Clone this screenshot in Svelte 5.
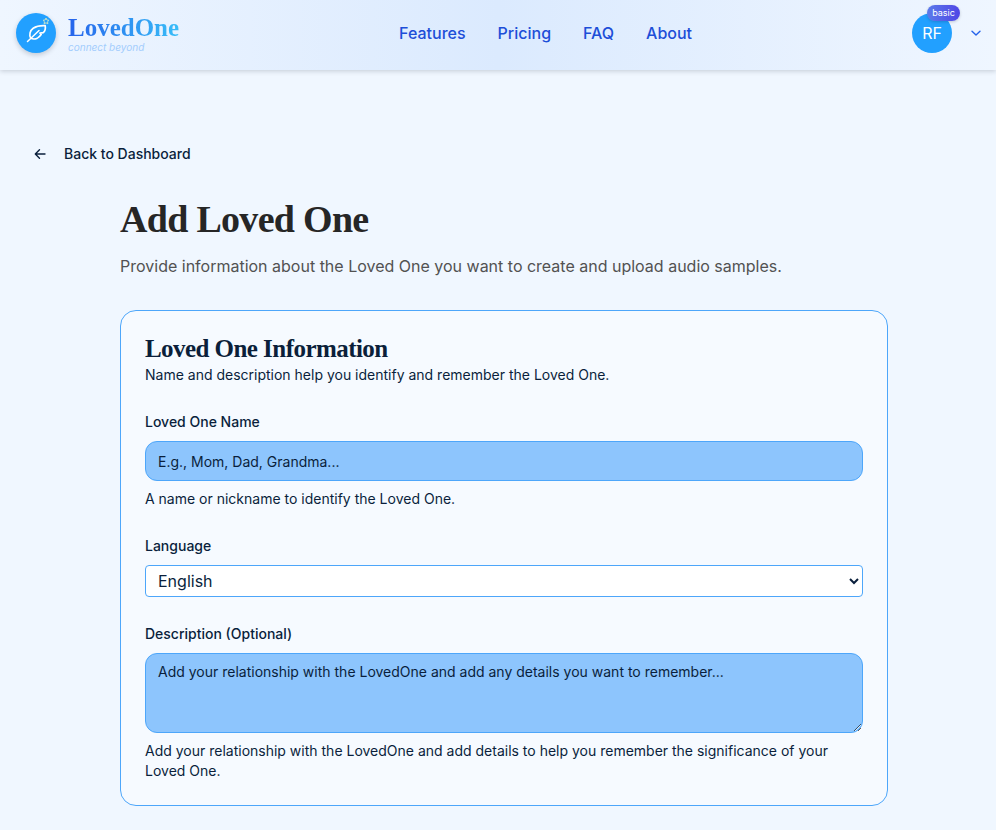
<script lang="ts">
	let nav = ['Features', 'Pricing', 'FAQ', 'About'];
</script>

<header class="topbar">
	<div class="brand">
		<div class="logo">
			<svg width="40" height="40" viewBox="0 0 40 40" fill="none">
				<path d="M11.5 28.5 L23 17.5" stroke="#fff" stroke-width="1.5" stroke-linecap="round" />
				<path d="M14.8 25.3 C12.8 22 14 17.5 17.2 15.2 C20.5 13 25 12.4 29.2 12.6 C29.6 15 29.2 18 27.2 19.7 L24 20.2 L25.2 21.5 C23 24.7 19 27.3 14.8 25.3 Z" stroke="#fff" stroke-width="1.7" stroke-linejoin="round" />
				<path d="M30 5 L30.9 7 L33 7.3 L31.5 8.7 L31.9 10.8 L30 9.8 L28.1 10.8 L28.5 8.7 L27 7.3 L29.1 7 Z" stroke="#c5e3c9" stroke-width="1" stroke-linejoin="round" />
			</svg>
		</div>
		<div class="wordmark">
			<span class="name">LovedOne</span>
			<span class="tag">connect beyond</span>
		</div>
	</div>
	<nav class="links">
		{#each nav as item}
			<span>{item}</span>
		{/each}
	</nav>
	<div class="account">
		<div class="avatar">
			RF
			<span class="badge">basic</span>
		</div>
		<svg width="12" height="12" viewBox="0 0 12 12" fill="none">
			<path d="M2 4.2 L6 8 L10 4.2" stroke="#2563eb" stroke-width="1.4" stroke-linecap="round" stroke-linejoin="round" />
		</svg>
	</div>
</header>

<main class="page">
	<div class="back">
		<svg width="16" height="16" viewBox="0 0 16 16" fill="none">
			<path d="M13 8 H3.5 M7.5 3.8 L3.3 8 L7.5 12.2" stroke="#0a1f3c" stroke-width="1.4" stroke-linecap="round" stroke-linejoin="round" />
		</svg>
		<span>Back to Dashboard</span>
	</div>

	<section class="content">
		<h1>Add Loved One</h1>
		<p class="lead">Provide information about the Loved One you want to create and upload audio samples.</p>

		<form class="card">
			<h2>Loved One Information</h2>
			<p class="sub">Name and description help you identify and remember the Loved One.</p>

			<div class="field first">
				<label for="name">Loved One Name</label>
				<input id="name" type="text" placeholder="E.g., Mom, Dad, Grandma..." />
				<p class="hint">A name or nickname to identify the Loved One.</p>
			</div>

			<div class="field">
				<label for="lang">Language</label>
				<select id="lang">
					<option>English</option>
				</select>
			</div>

			<div class="field">
				<label for="desc">Description (Optional)</label>
				<textarea id="desc" placeholder="Add your relationship with the LovedOne and add any details you want to remember..."></textarea>
				<p class="hint">Add your relationship with the LovedOne and add details to help you remember the significance of your Loved One.</p>
			</div>
		</form>
	</section>
</main>

<style>
	:global(body) {
		background: #f0f7ff;
		font-family: Inter, 'Liberation Sans', sans-serif;
		color: #0a1f3c;
	}
	.topbar {
		height: 70px;
		box-sizing: border-box;
		display: flex;
		justify-content: space-between;
		align-items: center;
		padding: 0 14px 4px 16px;
		background: linear-gradient(90deg, #eff6ff, #dbeafe 50%, #eff6ff);
		box-shadow: 0 1px 5px rgba(15, 23, 42, 0.2);
	}
	.brand {
		display: flex;
		align-items: center;
		gap: 12px;
	}
	.logo {
		width: 40px;
		height: 40px;
		border-radius: 50%;
		background: #22a0ff;
		box-shadow: 0 2px 5px rgba(15, 23, 42, 0.2);
	}
	.logo svg {
		display: block;
	}
	.wordmark {
		display: flex;
		flex-direction: column;
		padding-top: 2px;
	}
	.name {
		font-family: 'Liberation Serif', serif;
		font-weight: 700;
		font-size: 25px;
		line-height: 26px;
		background: linear-gradient(90deg, #2563eb, #38bdf8);
		background-clip: text;
		-webkit-background-clip: text;
		color: transparent;
	}
	.tag {
		font-size: 10px;
		line-height: 12px;
		font-style: italic;
		color: #a3cdfd;
	}
	.links {
		display: flex;
		gap: 32px;
		font-size: 16px;
		font-weight: 500;
		color: #1d4ed8;
	}
	.account {
		display: flex;
		align-items: center;
		gap: 18px;
	}
	.avatar {
		position: relative;
		width: 40px;
		height: 40px;
		border-radius: 50%;
		background: #22a0ff;
		color: #fff;
		font-size: 16px;
		display: flex;
		align-items: center;
		justify-content: center;
	}
	.badge {
		position: absolute;
		top: -8px;
		left: 15px;
		width: 33px;
		height: 16px;
		border-radius: 8px;
		background: linear-gradient(90deg, #5b7bea, #4f46e5);
		font-size: 9px;
		line-height: 16px;
		text-align: center;
		box-shadow: 0 1px 3px rgba(15, 23, 42, 0.2);
	}
	.page {
		padding: 68px 32px 24px;
	}
	.back {
		display: flex;
		align-items: center;
		gap: 16px;
		font-size: 14px;
		font-weight: 500;
		line-height: 32px;
	}
	.content {
		margin: 0 76px 0 88px;
		width: 768px;
	}
	h1 {
		font-family: 'Liberation Serif', serif;
		font-size: 38px;
		letter-spacing: -0.7px;
		line-height: 48px;
		font-weight: 700;
		color: #262626;
		margin: 25px 0 0;
	}
	.lead {
		margin: 11px 0 0;
		font-size: 16px;
		line-height: 24px;
		color: #525252;
	}
	.card {
		margin-top: 32px;
		box-sizing: border-box;
		width: 768px;
		border: 1px solid #4da6fa;
		border-radius: 16px;
		background: #f6faff;
		padding: 24px;
	}
	h2 {
		font-family: 'Liberation Serif', serif;
		font-size: 25px;
		letter-spacing: -0.55px;
		line-height: 28px;
		font-weight: 700;
		color: #0b1f3a;
		margin: 0;
	}
	.sub {
		margin: 2px 0 0;
		font-size: 14px;
		line-height: 20px;
	}
	.field {
		margin-top: 27px;
	}
	label {
		display: block;
		font-size: 14px;
		font-weight: 500;
		line-height: 20px;
		margin-bottom: 9px;
	}
	input,
	textarea {
		display: block;
		width: 100%;
		box-sizing: border-box;
		border: 1px solid #4da6fa;
		border-radius: 12px;
		background: #8dc5fd;
		font-family: inherit;
		font-size: 14px;
		color: #0a1f3c;
		padding: 0 12px;
		outline: none;
	}
	input {
		height: 40px;
	}
	textarea {
		height: 80px;
		padding-top: 8px;
		line-height: 20px;
	}
	input::placeholder,
	textarea::placeholder {
		color: #0a1f3c;
		opacity: 1;
	}
	select {
		display: block;
		width: 100%;
		height: 32px;
		box-sizing: border-box;
		border: 1px solid #4da6fa;
		border-radius: 4px;
		background: #fff;
		font-family: inherit;
		font-size: 16px;
		color: #0a1f3c;
		padding: 0 8px;
	}
	.hint {
		margin: 8px 0 0;
		font-size: 14px;
		line-height: 20px;
	}
</style>
